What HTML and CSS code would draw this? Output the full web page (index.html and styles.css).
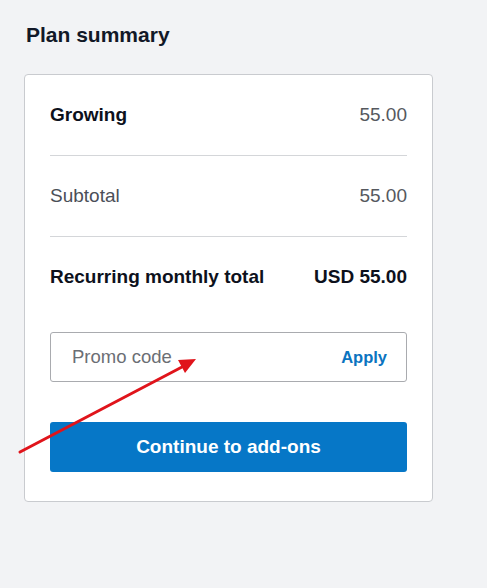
FILE: index.html
```html
<!DOCTYPE html>
<html>
<head>
<meta charset="utf-8">
<link rel="stylesheet" href="styles.css">
</head>
<body>
<div class="page">
  <h2 class="title">Plan summary</h2>
  <div class="card">
    <div class="row first">
      <span class="name strong">Growing</span>
      <span class="val">55.00</span>
    </div>
    <div class="row">
      <span class="name">Subtotal</span>
      <span class="val">55.00</span>
    </div>
    <div class="row total">
      <span class="name strong">Recurring monthly total</span>
      <span class="val strong">USD 55.00</span>
    </div>
    <div class="promo">
      <span class="placeholder">Promo code</span>
      <span class="apply">Apply</span>
    </div>
    <button class="cta">Continue to add-ons</button>
  </div>
</div>
<svg class="arrow" width="487" height="588" viewBox="0 0 487 588">
  <line x1="20" y1="452" x2="182" y2="367" stroke="#e0141b" stroke-width="3" stroke-linecap="round"/>
  <polygon points="196,359 178,360 185,373" fill="#e0141b"/>
</svg>
</body>
</html>
```
FILE: styles.css
```css
html, body {
  margin: 0;
  padding: 0;
  background: #f2f3f5;
  font-family: "Liberation Sans", Arial, sans-serif;
}
.page {
  padding: 23px 0 0 24px;
  width: 409px;
}
.title {
  margin: 0 0 0 2px;
  font-size: 21px;
  line-height: 24px;
  font-weight: bold;
  color: #111827;
}
.card {
  margin-top: 27px;
  background: #fff;
  border: 1px solid #c9cbcf;
  border-radius: 4px;
  padding: 0 25px 29px 25px;
}
.row {
  display: flex;
  justify-content: space-between;
  align-items: center;
  height: 28px;
  padding: 26px 0;
  border-top: 1px solid #d4d6d9;
  font-size: 19px;
}
.row.first {
  border-top: none;
}
.name {
  color: #4b4f58;
}
.val {
  color: #55585e;
}
.strong {
  font-weight: bold;
  color: #0d111c;
}
.promo {
  margin-top: 15px;
  height: 48px;
  border: 1px solid #a9abaf;
  border-radius: 3px;
  display: flex;
  align-items: center;
  justify-content: space-between;
  padding: 0 19px 0 21px;
}
.placeholder {
  font-size: 18.5px;
  color: #6b6e74;
}
.apply {
  font-size: 16.5px;
  font-weight: bold;
  color: #0b74c0;
}
.cta {
  display: block;
  width: 100%;
  margin-top: 40px;
  height: 50px;
  border: none;
  border-radius: 3px;
  background: #0677c7;
  color: #fff;
  font-family: "Liberation Sans", Arial, sans-serif;
  font-size: 19px;
  font-weight: bold;
}
.arrow {
  position: absolute;
  left: 0;
  top: 0;
  pointer-events: none;
}
```
